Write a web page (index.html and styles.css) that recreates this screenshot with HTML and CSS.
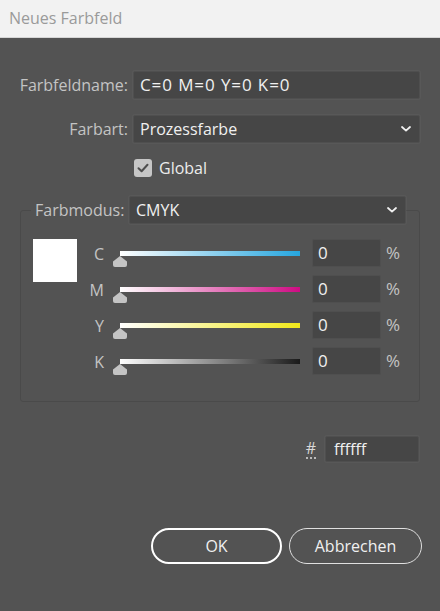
FILE: index.html
```html
<!DOCTYPE html>
<html lang="de">
<head>
<meta charset="utf-8">
<title>Neues Farbfeld</title>
<link rel="stylesheet" href="styles.css">
</head>
<body>
<div class="window">
  <div class="titlebar">Neues Farbfeld</div>
  <div class="content">
    <div class="form-row row-name">
      <span class="lbl">Farbfeldname:</span>
      <div class="field name">C=0 M=0 Y=0 K=0</div>
    </div>
    <div class="form-row row-type">
      <span class="lbl">Farbart:</span>
      <div class="field select">
        <span>Prozessfarbe</span>
        <svg class="chev" width="10" height="6" viewBox="0 0 10 6"><path d="M1 1 L5 4.6 L9 1" fill="none" stroke="#f0f0f0" stroke-width="1.8" stroke-linecap="round" stroke-linejoin="round"/></svg>
      </div>
    </div>
    <div class="check-row">
      <span class="checkbox"><svg width="12" height="10" viewBox="0 0 12 10"><path d="M1.5 5.2 L4.6 8.2 L10.5 1.8" fill="none" stroke="#4e4e4e" stroke-width="2" stroke-linecap="round" stroke-linejoin="round"/></svg></span>
      <span class="check-label">Global</span>
    </div>
    <div class="group">
      <div class="group-head">
        <span class="lbl">Farbmodus:</span>
        <div class="field select mode">
          <span>CMYK</span>
          <svg class="chev" width="10" height="6" viewBox="0 0 10 6"><path d="M1 1 L5 4.6 L9 1" fill="none" stroke="#f0f0f0" stroke-width="1.8" stroke-linecap="round" stroke-linejoin="round"/></svg>
        </div>
      </div>
      <div class="group-body">
        <div class="swatch"></div>
        <div class="sliders">
          <div class="slider-row">
            <span class="ch">C</span>
            <div class="slider">
              <div class="track track-c"></div>
              <svg class="thumb" width="14" height="11" viewBox="0 0 14 11"><path d="M7 0 L14 5.5 V9 Q14 11 12 11 H2 Q0 11 0 9 V5.5 Z" fill="#c4c4c4"/></svg>
            </div>
            <div class="num">0</div>
            <span class="pct">%</span>
          </div>
          <div class="slider-row">
            <span class="ch">M</span>
            <div class="slider">
              <div class="track track-m"></div>
              <svg class="thumb" width="14" height="11" viewBox="0 0 14 11"><path d="M7 0 L14 5.5 V9 Q14 11 12 11 H2 Q0 11 0 9 V5.5 Z" fill="#c4c4c4"/></svg>
            </div>
            <div class="num">0</div>
            <span class="pct">%</span>
          </div>
          <div class="slider-row">
            <span class="ch">Y</span>
            <div class="slider">
              <div class="track track-y"></div>
              <svg class="thumb" width="14" height="11" viewBox="0 0 14 11"><path d="M7 0 L14 5.5 V9 Q14 11 12 11 H2 Q0 11 0 9 V5.5 Z" fill="#c4c4c4"/></svg>
            </div>
            <div class="num">0</div>
            <span class="pct">%</span>
          </div>
          <div class="slider-row">
            <span class="ch">K</span>
            <div class="slider">
              <div class="track track-k"></div>
              <svg class="thumb" width="14" height="11" viewBox="0 0 14 11"><path d="M7 0 L14 5.5 V9 Q14 11 12 11 H2 Q0 11 0 9 V5.5 Z" fill="#c4c4c4"/></svg>
            </div>
            <div class="num">0</div>
            <span class="pct">%</span>
          </div>
        </div>
      </div>
    </div>
    <div class="hex-row">
      <span class="hash">#</span>
      <div class="field hex">ffffff</div>
    </div>
    <div class="buttons">
      <div class="btn btn-ok">OK</div>
      <div class="btn btn-cancel">Abbrechen</div>
    </div>
  </div>
</div>
</body>
</html>
```
FILE: styles.css
```css
* { box-sizing: border-box; }
html, body { margin: 0; padding: 0; }
body {
  width: 440px;
  height: 611px;
  background: #535353;
  font-family: "Open Sans", "Noto Sans", "Liberation Sans", sans-serif;
  font-size: 16px;
  overflow: hidden;
}
.window { width: 440px; height: 611px; background: #535353; }
.titlebar {
  height: 38px;
  background: #f2f2f2;
  color: #9a9a9a;
  font-size: 16px;
  line-height: 36px;
  padding-left: 9px;
  border-bottom: 1px solid #d6d6d6;
}
.content { padding-top: 33px; }
.form-row { display: flex; align-items: center; height: 28px; }
.form-row .lbl { width: 128px; text-align: right; color: #c4c4c4; white-space: nowrap; }
.form-row .field { margin-left: 5px; width: 287px; }
.row-type { margin-top: 16px; }
.field {
  height: 28px;
  background: #464646;
  border: 1px solid #4f4f4f;
  border-radius: 2px;
  color: #f0f0f0;
  padding-left: 6px;
  line-height: 26px;
  box-shadow: 0 0 0 1px rgba(255,255,255,0.03);
}
.name { font-size: 17px; letter-spacing: 0.9px; }
.select { display: flex; align-items: center; justify-content: space-between; padding-right: 8px; }
.select .chev { display: block; }
.check-row { display: flex; align-items: center; margin-top: 16px; margin-left: 134px; height: 18px; }
.checkbox {
  width: 18px; height: 18px; background: #c6c6c6; border-radius: 3px;
  display: flex; align-items: center; justify-content: center;
}
.check-label { color: #ececec; margin-left: 7px; }
.group {
  margin: 33px 0 0 20px;
  width: 400px;
  border: 1px solid #4a4a4a;
  border-radius: 3px;
  padding: 0 13px 26px 12px;
}
.group-head {
  display: flex; align-items: center;
  margin: -15px 0 0 -2px;
  padding-left: 4px;
  background: #535353;
}
.group-head .lbl { color: #c4c4c4; width: 94px; white-space: nowrap; }
.group-head .mode { width: 277px; }
.group-body { display: flex; align-items: flex-start; margin-top: 15px; }
.swatch { width: 44px; height: 43px; background: #ffffff; }
.sliders { display: flex; flex-direction: column; gap: 8px; margin-left: 11px; }
.slider-row { display: flex; align-items: flex-start; height: 28px; }
.ch { width: 16px; text-align: right; color: #c4c4c4; line-height: 28px; padding-top: 1px; }
.slider { width: 187px; margin-left: 9px; height: 28px; }
.track { margin: 12px 0 0 7px; width: 180px; height: 5px; }
.thumb { display: block; }
.track-c { background: linear-gradient(to right, #ffffff, #26a6df); }
.track-m { background: linear-gradient(to right, #ffffff, #ce0c83); }
.track-y { background: linear-gradient(to right, #ffffff, #f1e81a); }
.track-k { background: linear-gradient(to right, #ffffff 0%, #7a7a7a 60%, #1a1a1a 100%); }
.num { width: 69px; margin-left: 12px; padding-left: 5px; height: 28px; line-height: 26px;
  background: #464646; border: 1px solid #4f4f4f; border-radius: 2px; color: #f0f0f0; font-size: 17px; }
.pct { color: #c4c4c4; margin-left: 5px; line-height: 28px; font-size: 17px; }
.hex-row { display: flex; align-items: center; justify-content: flex-end; margin-top: 34px; width: 419px; height: 26px; }
.hash { color: #d8d8d8; border-bottom: 2px dotted #bbb; line-height: 18px; margin-right: 9px; }
.hex { width: 94px; height: 26px; line-height: 24px; padding-left: 8px; }
.buttons { display: flex; margin: 66px 0 0 151px; gap: 7px; }
.btn {
  height: 36px; border-radius: 18px; display: flex; align-items: center; justify-content: center;
  color: #f0f0f0; font-size: 16px;
}
.btn-ok { width: 131px; border: 2px solid #ffffff; }
.btn-cancel { width: 133px; border: 1.5px solid #e0e0e0; }
```
